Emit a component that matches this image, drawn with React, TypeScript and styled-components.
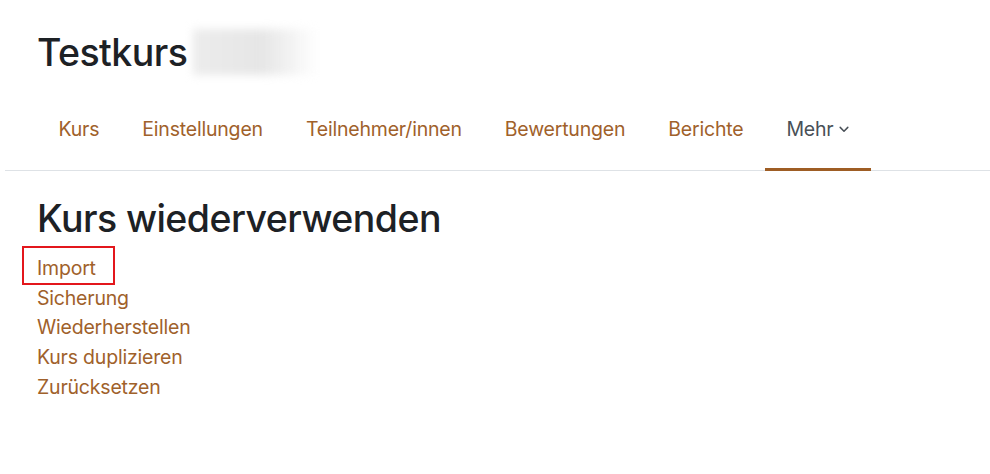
import React from 'react';
import styled, { createGlobalStyle } from 'styled-components';

const GlobalStyle = createGlobalStyle`
  html, body {
    margin: 0;
    padding: 0;
    background: #ffffff;
  }
  body {
    font-family: Inter, "Liberation Sans", Arial, sans-serif;
    color: #1d2125;
  }
`;

const brand = '#a0612b';

const Page = styled.div`
  padding: 0 0 0 5px;
`;

const Header = styled.header`
  padding: 29px 0 0 32px;
`;

const CourseTitle = styled.h1`
  margin: 0;
  display: flex;
  align-items: center;
  font-size: 37.5px;
  font-weight: 500;
  line-height: 45px;
  letter-spacing: -0.015em;
  color: #1d2125;
`;

const Blurred = styled.span`
  display: inline-block;
  width: 125px;
  height: 46px;
  margin-left: 6px;
  background: linear-gradient(90deg, #ececec 0%, #e6e6e6 55%, rgba(240, 240, 240, 0) 100%);
  filter: blur(4px);
`;

const NavBar = styled.nav`
  display: flex;
  margin-top: 40px;
  padding-left: 32px;
  border-bottom: 1px solid #dee2e6;
`;

const NavLink = styled.a<{ $active?: boolean }>`
  display: flex;
  align-items: center;
  gap: 6px;
  padding: 0 21.5px 23px;
  font-size: 19.5px;
  line-height: 29.75px;
  letter-spacing: -0.2px;
  text-decoration: none;
  color: ${({ $active }) => ($active ? '#495057' : brand)};
  border-bottom: 3px solid ${({ $active }) => ($active ? '#9e5d24' : 'transparent')};
  margin-bottom: -1px;
`;

const Main = styled.main`
  padding: 25px 0 0 32px;
`;

const SectionTitle = styled.h2`
  margin: 0 0 13px;
  font-size: 37.5px;
  font-weight: 500;
  line-height: 45px;
  letter-spacing: -0.015em;
  color: #1d2125;
`;

const LinkList = styled.ul`
  list-style: none;
  margin: 0;
  padding: 0;
`;

const LinkItem = styled.li`
  font-size: 19.5px;
  line-height: 29.75px;
  letter-spacing: -0.2px;
`;

const ActionLink = styled.a`
  position: relative;
  color: ${brand};
  text-decoration: none;
`;

const Highlight = styled.span`
  position: absolute;
  left: -15px;
  top: -10px;
  width: 89px;
  height: 35px;
  border: 2px solid #e3171c;
  pointer-events: none;
`;

const Chevron = () => (
  <svg width="10" height="7" viewBox="0 0 10 7" fill="none">
    <path d="M1.2 1.4 5 5.2 8.8 1.4" stroke="#495057" strokeWidth="1.5" strokeLinecap="round" strokeLinejoin="round" />
  </svg>
);

const tabs = ['Kurs', 'Einstellungen', 'Teilnehmer/innen', 'Bewertungen', 'Berichte'];
const actions = ['Import', 'Sicherung', 'Wiederherstellen', 'Kurs duplizieren', 'Zurücksetzen'];

export default function App() {
  return (
    <Page>
      <GlobalStyle />
      <Header>
        <CourseTitle>
          Testkurs
          <Blurred />
        </CourseTitle>
      </Header>
      <NavBar>
        {tabs.map((t) => (
          <NavLink key={t} href="#">{t}</NavLink>
        ))}
        <NavLink $active href="#">
          Mehr
          <Chevron />
        </NavLink>
      </NavBar>
      <Main>
        <SectionTitle>Kurs wiederverwenden</SectionTitle>
        <LinkList>
          {actions.map((a, i) => (
            <LinkItem key={a}>
              <ActionLink href="#">
                {a}
                {i === 0 && <Highlight />}
              </ActionLink>
            </LinkItem>
          ))}
        </LinkList>
      </Main>
    </Page>
  );
}
